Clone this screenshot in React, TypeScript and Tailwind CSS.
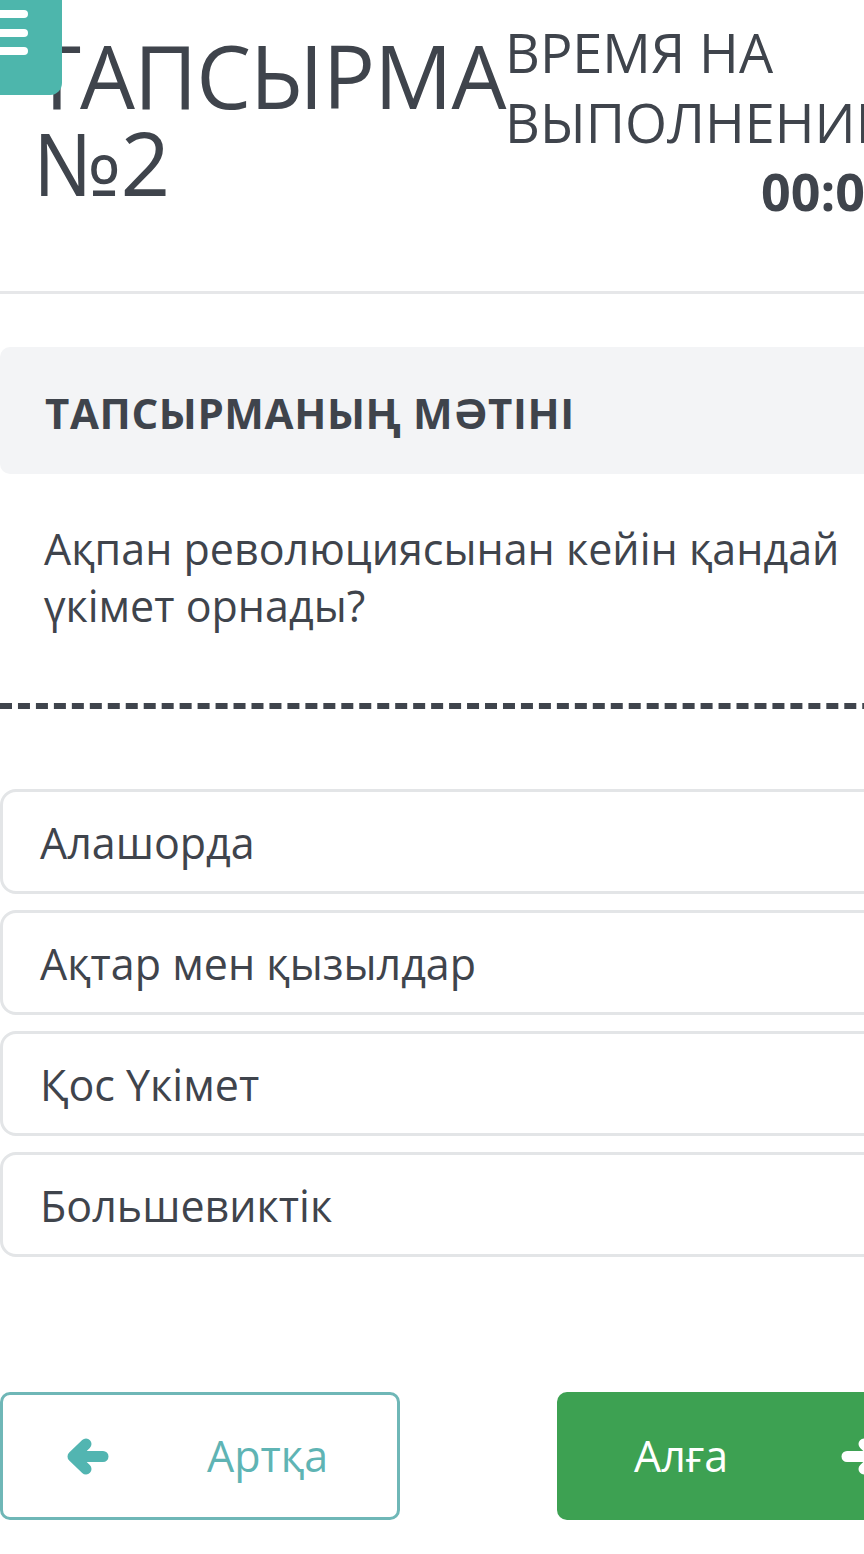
import React from "react";

const options = ["Алашорда", "Ақтар мен қызылдар", "Қос Үкімет", "Большевиктік"];

function Arrow({ dir, color }: { dir: "left" | "right"; color: string }) {
  return (
    <svg
      width="44"
      height="37"
      viewBox="0 0 44 37"
      className="shrink-0"
      style={dir === "right" ? { transform: "scaleX(-1)" } : undefined}
    >
      <path
        d="M20 6 L7 18.5 L20 31 M9 18.5 H37"
        fill="none"
        stroke={color}
        strokeWidth="11"
        strokeLinecap="round"
        strokeLinejoin="round"
      />
    </svg>
  );
}

export default function App() {
  return (
    <div
      className="relative w-[864px] h-[1554px] overflow-hidden bg-white text-[#3f444c]"
      style={{ fontFamily: '"Open Sans", "Noto Sans", sans-serif' }}
    >
      <div className="w-[1000px]">
        {/* Header */}
        <div className="flex items-start h-[291px]">
          <div className="ml-[33px] mt-[32px] text-[87px] leading-[87px] tracking-[-1px] w-[472px]">
            ТАПСЫРМА
            <br />
            №2
          </div>
          <div className="mt-[17px] w-[464px] text-[54px] leading-[70px]">
            <div>ВРЕМЯ НА</div>
            <div>ВЫПОЛНЕНИЕ:</div>
            <div className="text-right font-bold text-[52px] leading-[67px]">00:00:00</div>
          </div>
        </div>
        <div className="h-[3px] bg-[#e6e7e9]" />

        {/* Task text heading */}
        <div className="mt-[53px] h-[127px] rounded-[10px] bg-[#f3f4f6] flex items-center pl-[45px]">
          <span className="font-bold text-[42px] leading-none tracking-[0.6px] pt-[4px]">
            ТАПСЫРМАНЫҢ МӘТІНІ
          </span>
        </div>

        {/* Question */}
        <div className="pl-[44px] pt-[46px] w-[870px] text-[43px] leading-[57px]">
          Ақпан революциясынан кейін қандай үкімет орнады?
        </div>

        <div className="mt-[69px] border-t-[6px] border-dashed border-[#3f444c]" />

        {/* Options */}
        <div className="mt-[80px] flex flex-col gap-[16px]">
          {options.map((o) => (
            <div
              key={o}
              className="h-[105px] rounded-[16px] border-[3px] border-[#e3e5e7] pl-[37px] flex items-center text-[43px] leading-none"
            >
              <span className="pt-[1px]">{o}</span>
            </div>
          ))}
        </div>

        {/* Buttons */}
        <div className="mt-[135px] flex gap-[157px]">
          <div className="w-[400px] h-[128px] rounded-[10px] border-[3px] border-[#6fb7b7] flex items-center pl-[63px] text-[#5fb4b4]">
            <Arrow dir="left" color="#52b5b1" />
            <span className="ml-[97px] text-[43px] leading-none pb-[2px]">Артқа</span>
          </div>
          <div className="w-[400px] h-[128px] rounded-[10px] bg-[#3da152] flex items-center pl-[77px] text-white">
            <span className="text-[43px] leading-none pb-[2px]">Алға</span>
            <span className="ml-[112px]">
              <Arrow dir="right" color="#ffffff" />
            </span>
          </div>
        </div>
      </div>

      {/* Menu button overlay */}
      <div className="absolute left-0 top-0 w-[62px] h-[95px] rounded-br-[12px] bg-[#4db6ac] flex items-start">
        <svg width="30" height="60" viewBox="0 0 30 60" className="mt-[8px]">
          <rect x="-6" y="2" width="34" height="8" rx="4" fill="white" />
          <rect x="-6" y="21" width="34" height="8" rx="4" fill="white" />
          <rect x="-6" y="39" width="34" height="8" rx="4" fill="white" />
        </svg>
      </div>
    </div>
  );
}
